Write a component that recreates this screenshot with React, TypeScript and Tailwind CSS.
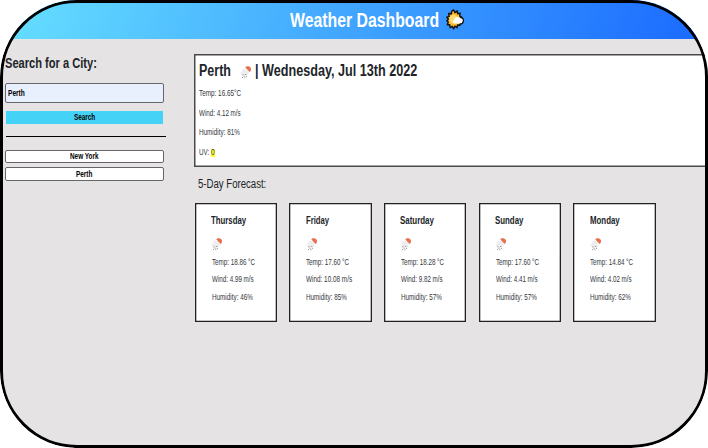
import { useLayoutEffect, useRef, useState } from 'react';

type TextProps = { children: string; width: number; className?: string };

/** Single line of text condensed or widened to an exact width. */
function FitText({ children, width, className = '' }: TextProps) {
  const ref = useRef<HTMLSpanElement>(null);
  const [scale, setScale] = useState(1);
  useLayoutEffect(() => {
    if (ref.current) setScale(width / ref.current.offsetWidth);
  }, [width, children]);
  return (
    <span className={`block shrink-0 ${className}`} style={{ width }}>
      <span
        ref={ref}
        className="inline-block origin-left whitespace-nowrap align-top"
        style={{ transform: `scaleX(${scale})` }}
      >
        {children}
      </span>
    </span>
  );
}

function SunLogo() {
  return (
    <svg viewBox="0 0 20 22" preserveAspectRatio="none" className="h-[21px] w-[18px] shrink-0">
      <path
        d="M8.500 1l1.500 2.800 2.500-1.800.4 3 2.900-.6-.6 3 2 1.200-1.500 6.200-.2 2.300-2.700-.3-.5 2.700-2.400-1.500L8.500 20.800l-1.500-2.600-2.500 1.300-.3-2.900-2.700-.2 1-2.700L.9 12.300l1.900-1.600L.9 8.600l2.600-.9-.5-2.900 2.900.3.5-2.800z"
        fill="#fdb92c"
        stroke="#141414"
        strokeWidth="1.600"
        strokeLinejoin="round"
      />
      <circle cx="8.300" cy="10.500" r="4.600" fill="#ffdc70" />
      <path
        d="M9.800 15.200c-2.600-.1-3-3.500-.3-4 .1-3.500 4.800-4.200 6-1.400 2.600-.2 3.800 1.200 3.500 3-.2 1.500-1.400 2.400-3 2.400z"
        fill="#fff"
      />
      <path d="M15.600 8.400c2.600.2 4 1.900 3.700 4.300-.2 1.800-1.500 2.900-3.500 3.200" fill="none" stroke="#141414" strokeWidth="1.400" />
    </svg>
  );
}

function RainIcon({ className = '' }: { className?: string }) {
  return (
    <svg viewBox="0 0 12 14" className={`h-3.5 w-3 shrink-0 ${className}`}>
      <path d="M5.200 2.300C6.300.6 9.700.7 10.800 2.900c.7 1.700 0 3.200-1.400 4z" fill="#e5714f" />
      <path d="M2 10C0 9.300.3 6.700 2.100 6.300 1.800 3.600 4.800 2.700 6.200 4.700c1.900 0 3 1.500 2.500 3C8.700 9.200 8 10 7 10z" fill="#eeeeef" />
      <path
        d="M2.500 9.900h.9M5.300 9.500h.9M3.600 11.200h.9M5.900 11.300h.9M2.300 12.500h.7M4.500 12.800h.8"
        stroke="#60606c"
        strokeWidth="0.900"
      />
    </svg>
  );
}

type Day = {
  name: string;
  nameWidth: number;
  temp: [string, number];
  wind: [string, number];
  humidity: [string, number];
};

const days: Day[] = [
  { name: 'Thursday', nameWidth: 35, temp: ['Temp: 18.86 °C', 43.5], wind: ['Wind: 4.99 m/s', 42], humidity: ['Humidity: 46%', 41] },
  { name: 'Friday', nameWidth: 23.5, temp: ['Temp: 17.60 °C', 43.5], wind: ['Wind: 10.08 m/s', 46], humidity: ['Humidity: 85%', 41] },
  { name: 'Saturday', nameWidth: 34, temp: ['Temp: 18.28 °C', 43.5], wind: ['Wind: 9.82 m/s', 42], humidity: ['Humidity: 57%', 41] },
  { name: 'Sunday', nameWidth: 28.5, temp: ['Temp: 17.60 °C', 43.5], wind: ['Wind: 4.41 m/s', 42], humidity: ['Humidity: 57%', 41] },
  { name: 'Monday', nameWidth: 30, temp: ['Temp: 14.84 °C', 43.5], wind: ['Wind: 4.02 m/s', 42], humidity: ['Humidity: 62%', 41] },
];

function DayCard({ day }: { day: Day }) {
  return (
    <article className="h-[119px] w-[82.5px] shrink-0 border border-[#222226] bg-white pl-[15.5px] pt-[10px] text-[#34383d] shadow-[inset_0_0_0_0.3px_#222226]">
      <FitText width={day.nameWidth} className="h-[12px] text-[10.5px] font-bold leading-[13px] text-[#212529]">
        {day.name}
      </FitText>
      <RainIcon className="mt-[11px]" />
      <div className="mt-[6.5px] flex flex-col gap-[7.8px] pl-[0.5px] text-[8.2px] leading-[10px]">
        <FitText width={day.temp[1]} className="h-[10px]">{day.temp[0]}</FitText>
        <FitText width={day.wind[1]} className="h-[10px]">{day.wind[0]}</FitText>
        <FitText width={day.humidity[1]} className="h-[10px]">{day.humidity[0]}</FitText>
      </div>
    </article>
  );
}

export default function App() {
  return (
    <div className="h-[448px] w-[708px] bg-white font-['Liberation_Sans',Arial,sans-serif]">
      <div className="relative h-full w-full overflow-hidden rounded-[77px] bg-[#e5e3e4]">
        <header className="flex h-[39px] items-center bg-[linear-gradient(105deg,#66e0ff,#1a69ff)] pl-[290px]">
          <FitText width={149.5} className="h-[24px] text-[20px] font-bold leading-[25px] text-white">
            Weather Dashboard
          </FitText>
          <span className="ml-[6px]">
            <SunLogo />
          </span>
        </header>

        <main className="flex">
          <aside className="w-[194px] shrink-0 pl-[5px] pt-[15px]">
            <FitText width={92} className="h-[18px] text-[14px] font-bold leading-[18px] text-[#212529]">
              Search for a City:
            </FitText>
            <div className="mt-[11px] flex h-[20px] w-[159px] items-center rounded-[2px] border border-[#66676d] bg-[#e8effd] pl-[2px] text-black">
              <FitText width={17} className="h-[10px] text-[8.5px] font-bold leading-[10px]">Perth</FitText>
            </div>
            <button className="ml-px mt-[8px] flex h-[13px] w-[157px] items-center justify-center bg-[#44d2f6] pb-px text-black">
              <FitText width={21} className="h-[10px] text-[8.5px] font-bold leading-[10px]">Search</FitText>
            </button>
            <hr className="ml-px mt-[12px] w-[160px] border-t border-black" />
            <button className="mt-[13px] flex h-[13px] w-[159px] items-center justify-center rounded-[2px] border border-[#66666a] bg-white pb-px text-black">
              <FitText width={28.5} className="h-[10px] text-[8.5px] font-bold leading-[10px]">New York</FitText>
            </button>
            <button className="mt-[4px] flex h-[14px] w-[159px] items-center justify-center rounded-[2px] border border-[#66666a] bg-white pb-px text-black">
              <FitText width={16.5} className="h-[10px] text-[8.5px] font-bold leading-[10px]">Perth</FitText>
            </button>
          </aside>

          <section className="min-w-0 flex-1 pt-[15px]">
            <div className="h-[113px] border border-[#4a4a4d] bg-white pl-[4px] pt-[6px] shadow-[inset_0_0_0_0.5px_#4a4a4d]">
              <div className="flex h-[20px] text-[16px] font-bold leading-[20px] text-[#212529]">
                <FitText width={32}>Perth</FitText>
                <RainIcon className="ml-[9px] mt-[4px]" />
                <FitText width={162.5} className="ml-[3px]">| Wednesday, Jul 13th 2022</FitText>
              </div>
              <div className="mt-[8px] flex flex-col gap-[9.67px] text-[8.2px] leading-[10px] text-[#34383d]">
                <FitText width={42} className="h-[10px]">Temp: 16.65°C</FitText>
                <FitText width={42} className="h-[10px]">Wind: 4.12 m/s</FitText>
                <FitText width={41} className="h-[10px]">Humidity: 81%</FitText>
                <div className="flex h-[10px] items-center">
                  <FitText width={10} className="h-[10px]">UV:</FitText>
                  <span className="ml-[2px] flex h-[8px] w-[4px] items-center bg-[#ffff28]">
                    <FitText width={4} className="h-[10px]">0</FitText>
                  </span>
                </div>
              </div>
            </div>

            <FitText width={68} className="ml-[4px] mt-[9px] h-[16px] text-[12px] leading-[16px] text-[#212529]">
              5-Day Forecast:
            </FitText>
            <div className="mt-[11px] flex gap-[12.2px] pl-[0.5px]">
              {days.map((day) => (
                <DayCard key={day.name} day={day} />
              ))}
            </div>
          </section>
        </main>

        {/* Window frame: rounded outline with square-cut straight edges */}
        <div className="pointer-events-none absolute inset-0 rounded-[77px] border-[3px] border-black" />
        <div className="absolute left-[77px] right-[77px] top-0 h-[3px] bg-black" />
        <div className="absolute bottom-0 left-[74px] right-[77px] h-[3px] bg-black" />
      </div>
    </div>
  );
}
